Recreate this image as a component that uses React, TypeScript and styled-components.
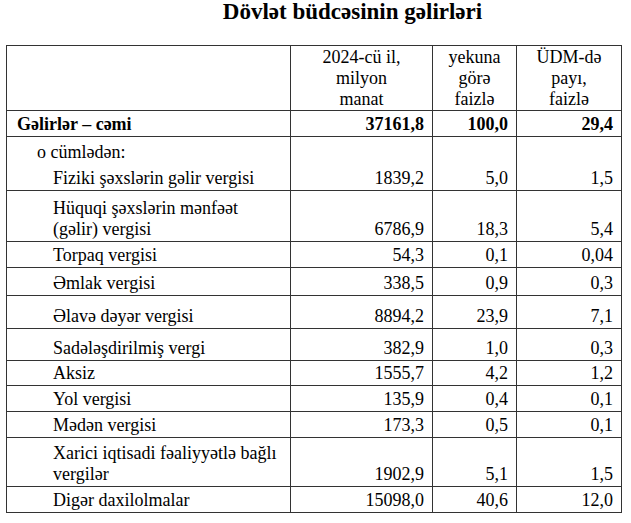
import styled, { createGlobalStyle } from 'styled-components';

const serif = `'Liberation Serif', 'Times New Roman', serif`;

const GlobalStyle = createGlobalStyle`
  body {
    margin: 0;
    background: #ffffff;
    color: #000000;
  }
`;

const Page = styled.div`
  width: 631px;
  height: 523px;
  overflow: hidden;
  background: #ffffff;
  font-family: ${serif};
`;

const Title = styled.h1`
  margin: 0;
  padding: 0 0 0 74px;
  height: 45px;
  box-sizing: border-box;
  text-align: center;
  font-family: ${serif};
  font-size: 23px;
  line-height: 24px;
  font-weight: 700;
`;

const Table = styled.table`
  margin-left: 6px;
  width: 615px;
  border-collapse: collapse;
  table-layout: fixed;
  font-family: ${serif};
  font-size: 18px;
  line-height: 21px;
  color: #000000;
`;

const Row = styled.tr<{ $h: number }>`
  height: ${(p) => p.$h}px;
`;

const HeadCell = styled.th`
  border: 1px solid #333333;
  padding: 0 2px;
  font-family: ${serif};
  font-weight: 400;
  text-align: center;
  vertical-align: middle;
`;

const Label = styled.td<{ $indent: number; $bold?: boolean }>`
  border: 1px solid #333333;
  padding: 0 4px 1px ${(p) => p.$indent}px;
  vertical-align: bottom;
  white-space: nowrap;
  font-family: ${serif};
  font-weight: ${(p) => (p.$bold ? 700 : 400)};
`;

const Value = styled.td<{ $bold?: boolean }>`
  border: 1px solid #333333;
  padding: 0 8px 1px 2px;
  text-align: right;
  vertical-align: bottom;
  font-family: ${serif};
  font-weight: ${(p) => (p.$bold ? 700 : 400)};
`;

const Lead = styled.div`
  margin-left: -16px;
  margin-bottom: 5px;
`;

type Item = {
  label: React.ReactNode;
  values: string[];
  h: number;
};

const items: Item[] = [
  { label: <>Hüquqi şəxslərin mənfəət<br />(gəlir) vergisi</>, values: ['6786,9', '18,3', '5,4'], h: 51 },
  { label: 'Torpaq vergisi', values: ['54,3', '0,1', '0,04'], h: 26 },
  { label: 'Əmlak vergisi', values: ['338,5', '0,9', '0,3'], h: 28 },
  { label: 'Əlavə dəyər vergisi', values: ['8894,2', '23,9', '7,1'], h: 33 },
  { label: 'Sadələşdirilmiş vergi', values: ['382,9', '1,0', '0,3'], h: 32 },
  { label: 'Aksiz', values: ['1555,7', '4,2', '1,2'], h: 25 },
  { label: 'Yol vergisi', values: ['135,9', '0,4', '0,1'], h: 26 },
  { label: 'Mədən vergisi', values: ['173,3', '0,5', '0,1'], h: 26 },
  { label: <>Xarici iqtisadi fəaliyyətlə bağlı<br />vergilər</>, values: ['1902,9', '5,1', '1,5'], h: 49 },
  { label: 'Digər daxilolmalar', values: ['15098,0', '40,6', '12,0'], h: 26 },
];

const App = () => (
  <Page>
    <GlobalStyle />
    <Title>Dövlət büdcəsinin gəlirləri</Title>
    <Table>
      <colgroup>
        <col style={{ width: 284 }} />
        <col style={{ width: 142 }} />
        <col style={{ width: 84 }} />
        <col style={{ width: 105 }} />
      </colgroup>
      <thead>
        <Row $h={65}>
          <HeadCell />
          <HeadCell>2024-cü il,<br />milyon<br />manat</HeadCell>
          <HeadCell>yekuna<br />görə<br />faizlə</HeadCell>
          <HeadCell>ÜDM-də<br />payı,<br />faizlə</HeadCell>
        </Row>
      </thead>
      <tbody>
        <Row $h={26}>
          <Label $indent={10} $bold>Gəlirlər – cəmi</Label>
          <Value $bold>37161,8</Value>
          <Value $bold>100,0</Value>
          <Value $bold>29,4</Value>
        </Row>
        <Row $h={54}>
          <Label $indent={46}>
            <Lead>o cümlədən:</Lead>
            Fiziki şəxslərin gəlir vergisi
          </Label>
          <Value>1839,2</Value>
          <Value>5,0</Value>
          <Value>1,5</Value>
        </Row>
        {items.map((item, index) => (
          <Row $h={item.h} key={index}>
            <Label $indent={46}>{item.label}</Label>
            {item.values.map((v, i) => (
              <Value key={i}>{v}</Value>
            ))}
          </Row>
        ))}
      </tbody>
    </Table>
  </Page>
);

export default App;
